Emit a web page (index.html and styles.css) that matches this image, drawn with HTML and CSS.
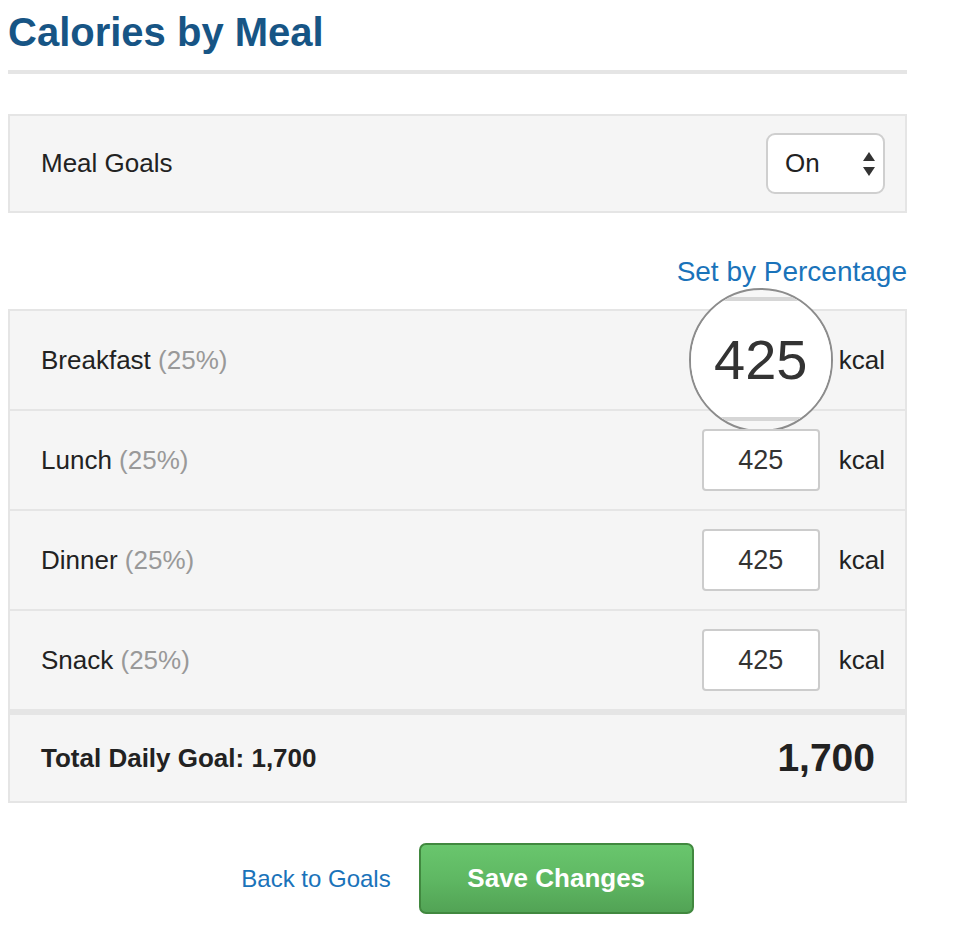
FILE: index.html
```html
<!DOCTYPE html>
<html>
<head>
<meta charset="utf-8">
<link rel="stylesheet" href="styles.css">
</head>
<body>
<div class="page">
  <h1 class="title">Calories by Meal</h1>

  <div class="goals-box">
    <span class="goals-label">Meal Goals</span>
    <div class="select">
      <span class="select-text">On</span>
      <svg class="select-arrows" width="14" height="26" viewBox="0 0 14 26">
        <path d="M7 1 L13 10 L1 10 Z" fill="#333"/>
        <path d="M1 16 L13 16 L7 25 Z" fill="#333"/>
      </svg>
    </div>
  </div>

  <div class="link-row"><a class="link link-pct" href="#">Set by Percentage</a></div>

  <div class="meals">
    <div class="meal-row">
      <span class="meal-label">Breakfast <span class="pct">(25%)</span></span>
      <div class="meal-input-wrap">
        <div class="meal-input">425</div>
        <div class="lens">
          <div class="lens-box">425</div>
        </div>
      </div>
      <span class="unit">kcal</span>
    </div>
    <div class="meal-row">
      <span class="meal-label">Lunch <span class="pct">(25%)</span></span>
      <div class="meal-input-wrap"><div class="meal-input">425</div></div>
      <span class="unit">kcal</span>
    </div>
    <div class="meal-row">
      <span class="meal-label">Dinner <span class="pct">(25%)</span></span>
      <div class="meal-input-wrap"><div class="meal-input">425</div></div>
      <span class="unit">kcal</span>
    </div>
    <div class="meal-row">
      <span class="meal-label">Snack <span class="pct">(25%)</span></span>
      <div class="meal-input-wrap"><div class="meal-input">425</div></div>
      <span class="unit">kcal</span>
    </div>
    <div class="total-row">
      <span class="total-label">Total Daily Goal: 1,700</span>
      <span class="total-value">1,700</span>
    </div>
  </div>

  <div class="actions">
    <a class="link link-back" href="#">Back to Goals</a>
    <button class="save-btn" type="button">Save Changes</button>
  </div>
</div>
</body>
</html>
```

FILE: styles.css
```css
html, body {
  margin: 0;
  padding: 0;
  background: #ffffff;
}

body {
  padding: 8px;
  font-family: "Liberation Sans", Arial, Helvetica, sans-serif;
  color: #222222;
}

.page {
  width: 899px;
}

.title {
  margin: 0;
  font-size: 40px;
  line-height: 48px;
  font-weight: bold;
  color: #175585;
  padding-bottom: 14px;
  border-bottom: 4px solid #e5e5e5;
}

.goals-box {
  margin-top: 40px;
  height: 95px;
  background: #f5f5f5;
  border: 2px solid #e5e5e5;
  display: flex;
  align-items: center;
  justify-content: space-between;
  padding: 0 20px 0 31px;
}

.goals-label {
  font-size: 26px;
  color: #222;
}

.select {
  width: 119px;
  height: 61px;
  box-sizing: border-box;
  background: #ffffff;
  border: 2px solid #cfcfcf;
  border-radius: 9px;
  display: flex;
  align-items: center;
  justify-content: space-between;
  padding: 0 7px 0 17px;
}

.select-text {
  font-size: 26px;
  color: #222;
}

.select-arrows {
  display: block;
}

.link-row {
  margin-top: 44px;
  display: flex;
  justify-content: flex-end;
  line-height: 30px;
}

.link {
  color: #1a73ba;
  text-decoration: none;
}

.link-pct {
  font-size: 28px;
}

.link-back {
  font-size: 24px;
}

.meals {
  margin-top: 22px;
  border-left: 2px solid #e5e5e5;
  border-right: 2px solid #e5e5e5;
  border-bottom: 2px solid #e5e5e5;
}

.meal-row {
  height: 98px;
  border-top: 2px solid #e5e5e5;
  background: #f5f5f5;
  display: flex;
  align-items: center;
  padding: 0 20px 0 31px;
}

.meal-label {
  flex: 1;
  font-size: 26px;
  color: #222;
}

.pct {
  color: #999999;
}

.meal-input-wrap {
  position: relative;
  width: 118px;
  height: 62px;
}

.meal-input {
  width: 118px;
  height: 62px;
  box-sizing: border-box;
  background: #ffffff;
  border: 2px solid #cccccc;
  border-radius: 4px;
  font-size: 27px;
  color: #333;
  display: flex;
  align-items: center;
  justify-content: center;
}

.unit {
  margin-left: 19px;
  font-size: 26px;
  color: #222;
}

.lens {
  position: absolute;
  left: -13px;
  top: -41px;
  width: 144px;
  height: 144px;
  box-sizing: border-box;
  border: 2px solid #8c8c8c;
  border-radius: 50%;
  overflow: hidden;
  background: #f7f7f7;
}

.lens-box {
  position: absolute;
  left: -48px;
  top: 7px;
  width: 236px;
  height: 124px;
  box-sizing: border-box;
  background: #ffffff;
  border: 4px solid #d6d6d6;
  border-radius: 8px;
  font-size: 56px;
  color: #333;
  display: flex;
  align-items: center;
  justify-content: center;
}

.total-row {
  height: 86px;
  border-top: 6px solid #e5e5e5;
  background: #f5f5f5;
  display: flex;
  align-items: center;
  justify-content: space-between;
  padding: 0 30px 0 31px;
}

.total-label {
  font-size: 26px;
  font-weight: bold;
  color: #222;
}

.total-value {
  font-size: 39px;
  font-weight: bold;
  color: #222;
}

.actions {
  margin-top: 40px;
  display: flex;
  align-items: center;
  justify-content: center;
  gap: 28px;
  padding-left: 20px;
}

.save-btn {
  width: 275px;
  height: 71px;
  box-sizing: border-box;
  border: 2px solid #41883f;
  border-radius: 7px;
  background: linear-gradient(to bottom, #69c66d 0%, #5fb863 50%, #52a355 100%);
  color: #ffffff;
  font-family: "Liberation Sans", Arial, Helvetica, sans-serif;
  font-size: 26px;
  font-weight: bold;
  padding: 0;
  cursor: pointer;
}
```
